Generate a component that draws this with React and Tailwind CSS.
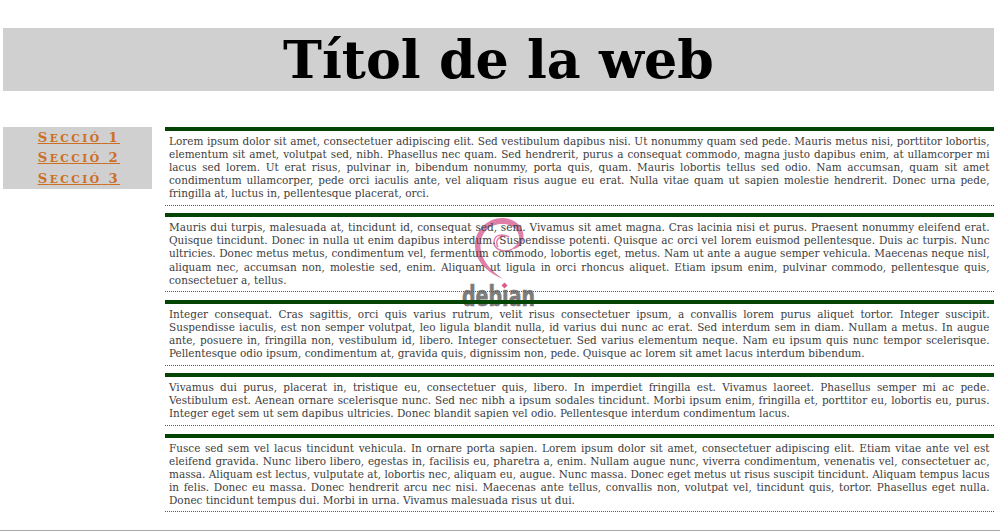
const sections = ["1", "2", "3"];

const articles = [
  [
    "Lorem ipsum dolor sit amet, consectetuer adipiscing elit. Sed vestibulum dapibus nisi. Ut nonummy quam sed pede. Mauris metus nisi, porttitor lobortis,",
    "elementum sit amet, volutpat sed, nibh. Phasellus nec quam. Sed hendrerit, purus a consequat commodo, magna justo dapibus enim, at ullamcorper mi",
    "lacus sed lorem. Ut erat risus, pulvinar in, bibendum nonummy, porta quis, quam. Mauris lobortis tellus sed odio. Nam accumsan, quam sit amet",
    "condimentum ullamcorper, pede orci iaculis ante, vel aliquam risus augue eu erat. Nulla vitae quam ut sapien molestie hendrerit. Donec urna pede,",
    "fringilla at, luctus in, pellentesque placerat, orci.",
  ],
  [
    "Mauris dui turpis, malesuada at, tincidunt id, consequat sed, sem. Vivamus sit amet magna. Cras lacinia nisi et purus. Praesent nonummy eleifend erat.",
    "Quisque tincidunt. Donec in nulla ut enim dapibus interdum. Suspendisse potenti. Quisque ac orci vel lorem euismod pellentesque. Duis ac turpis. Nunc",
    "ultricies. Donec metus metus, condimentum vel, fermentum commodo, lobortis eget, metus. Nam ut ante a augue semper vehicula. Maecenas neque nisl,",
    "aliquam nec, accumsan non, molestie sed, enim. Aliquam ut ligula in orci rhoncus aliquet. Etiam ipsum enim, pulvinar commodo, pellentesque quis,",
    "consectetuer a, tellus.",
  ],
  [
    "Integer consequat. Cras sagittis, orci quis varius rutrum, velit risus consectetuer ipsum, a convallis lorem purus aliquet tortor. Integer suscipit.",
    "Suspendisse iaculis, est non semper volutpat, leo ligula blandit nulla, id varius dui nunc ac erat. Sed interdum sem in diam. Nullam a metus. In augue",
    "ante, posuere in, fringilla non, vestibulum id, libero. Integer consectetuer. Sed varius elementum neque. Nam eu ipsum quis nunc tempor scelerisque.",
    "Pellentesque odio ipsum, condimentum at, gravida quis, dignissim non, pede. Quisque ac lorem sit amet lacus interdum bibendum.",
  ],
  [
    "Vivamus dui purus, placerat in, tristique eu, consectetuer quis, libero. In imperdiet fringilla est. Vivamus laoreet. Phasellus semper mi ac pede.",
    "Vestibulum est. Aenean ornare scelerisque nunc. Sed nec nibh a ipsum sodales tincidunt. Morbi ipsum enim, fringilla et, porttitor eu, lobortis eu, purus.",
    "Integer eget sem ut sem dapibus ultricies. Donec blandit sapien vel odio. Pellentesque interdum condimentum lacus.",
  ],
  [
    "Fusce sed sem vel lacus tincidunt vehicula. In ornare porta sapien. Lorem ipsum dolor sit amet, consectetuer adipiscing elit. Etiam vitae ante vel est",
    "eleifend gravida. Nunc libero libero, egestas in, facilisis eu, pharetra a, enim. Nullam augue nunc, viverra condimentum, venenatis vel, consectetuer ac,",
    "massa. Aliquam est lectus, vulputate at, lobortis nec, aliquam eu, augue. Nunc massa. Donec eget metus ut risus suscipit tincidunt. Aliquam tempus lacus",
    "in felis. Donec eu massa. Donec hendrerit arcu nec nisi. Maecenas ante tellus, convallis non, volutpat vel, tincidunt quis, tortor. Phasellus eget nulla.",
    "Donec tincidunt tempus dui. Morbi in urna. Vivamus malesuada risus ut dui.",
  ],
];

function DebianLogo() {
  return (
    <svg className="absolute left-[455px] top-[212px] h-[100px] w-[90px]" viewBox="455 212 90 100">
      <path
        d="M503 279 C486 272 475.500 261 475 246 C474.500 230 488 218 502 218 C514 218 523.500 226 523.500 236 C523.500 245 517 250 510 249.500 C515 247 519.500 243 519 237 C518.500 229 512 224 502 224 C489 224 480.500 233 480.500 246 C480.500 259 490 270 503 279 Z"
        fill="#df7ea8"
      />
      <path d="M512 249.500 C504 253 494 250 494 242 C494 235 502 233 509 237 M498 247 C494 240 500 235.500 505 236" fill="none" stroke="#df7ea8" strokeWidth="1.500" />
      <text
        x="462"
        y="306"
        textLength="73"
        lengthAdjust="spacingAndGlyphs"
        fontSize="28"
        fontWeight="700"
        fill="#7c7c7c"
        stroke="#7c7c7c"
        strokeWidth="0.700"
        className="font-['DejaVu_Sans',sans-serif]"
      >
        debıan
      </text>
      <path d="M504.500 282.500 L507.500 285.500 L504.500 288.500 L501.500 285.500 Z" fill="#dc5a8c" />
    </svg>
  );
}

function Article({ lines }) {
  return (
    <article className="border-t-4 border-b border-t-[#044404] border-b-[#2f7a2f] [border-bottom-style:dotted] px-1 pt-[4px] pb-[4.400px]">
      {lines.map((line, i) => (
        <p
          key={i}
          className={
            i === lines.length - 1
              ? "h-[13.100px] whitespace-nowrap"
              : "h-[13.100px] whitespace-nowrap [text-align-last:justify]"
          }
        >
          {line}
        </p>
      ))}
    </article>
  );
}

export default function App() {
  return (
    <div className="relative isolate flex h-[531px] flex-col overflow-hidden border-b border-[#aaa8a5] bg-white pt-[28.400px] pr-[6.500px] pl-[3.300px] font-['DejaVu_Serif',serif]">
      <div className="absolute inset-0 -z-10">
        <DebianLogo />
      </div>
      <header className="flex h-[63px] shrink-0 items-center justify-center bg-[#d0d0d0]">
        <h1 className="text-[52.300px] leading-[63px] font-bold text-black">Títol de la web</h1>
      </header>
      <div className="mt-[35.300px] flex items-start">
        <nav className="flex h-[62.300px] w-[148.700px] shrink-0 flex-col items-center bg-[#d0d0d0] pl-[2.500px]">
          {sections.map((section) => (
            <a
              key={section}
              href="#"
              className="h-[20.800px] text-[13.200px] leading-[21px] font-bold tracking-[2.400px] text-[#cc6f24] underline [text-decoration-skip-ink:none]"
            >
              S<span className="text-[10.800px]">ECCIÓ</span> {section}
            </a>
          ))}
        </nav>
        <main className="ml-[13px] flex min-w-0 flex-1 flex-col gap-[7.700px] font-['DejaVu_Serif_Condensed','DejaVu_Serif',serif] text-[11.630px] leading-[13.100px] text-[#404040] [font-stretch:condensed]">
          {articles.map((lines) => (
            <Article key={lines[0]} lines={lines} />
          ))}
        </main>
      </div>
    </div>
  );
}
